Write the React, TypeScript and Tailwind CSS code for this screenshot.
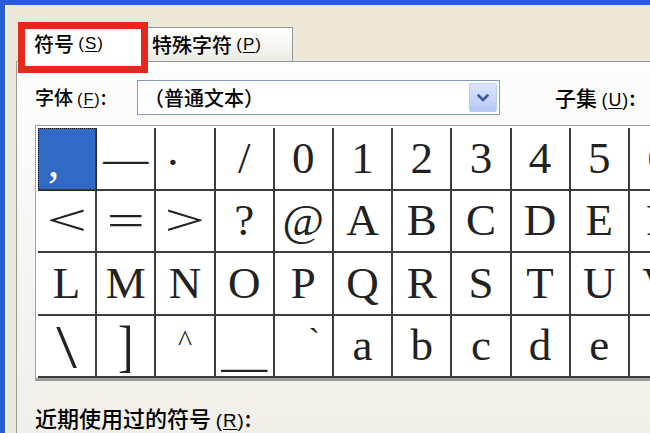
import React from "react";

const cjk = "font-['Noto_Sans_CJK_SC','Noto_Sans',sans-serif]";
const serif = "font-['Liberation_Serif','Times_New_Roman',serif]";

const ROWS: string[][] = [
  [",", "—", ".", "/", "0", "1", "2", "3", "4", "5", "6"],
  ["<", "=", ">", "?", "@", "A", "B", "C", "D", "E", "F"],
  ["L", "M", "N", "O", "P", "Q", "R", "S", "T", "U", "V"],
  ["\\", "]", "^", "_", "`", "a", "b", "c", "d", "e", "f"],
];

// per-cell tweaks for glyphs that sit off-centre in the original
const CELL_STYLE: Record<string, string> = {
  "0-0": "bg-[#316ac5] text-white font-bold justify-start items-end pl-[10px] pb-[4px] outline-1 outline-dotted outline-[#111] -outline-offset-1",
  "0-2": "pr-[24px] pb-[16px]",
  "3-2": "items-start pt-[10px]",
  "3-3": "items-end pb-[2px]",
  "3-4": "justify-end items-start pr-[12px] pt-[8px]",
};

const GLYPH_STYLE: Record<string, string> = {
  "1-0": "scale-x-[1.6]",
  "1-1": "scale-x-[1.5]",
  "1-2": "scale-x-[1.6]",
  "3-0": "text-[62px] scale-x-[1.2]",
  "3-1": "text-[58px] scale-x-[0.8]",
  "3-2": "text-[30px]",
  "3-3": "scale-x-[2]",
  "3-4": "text-[34px]",
};

function Key({ k }: { k: string }) {
  return (
    <span className="font-['Liberation_Sans',sans-serif] text-[0.85em] ml-[0.25em] tracking-[1px]">
      (<span className="underline underline-offset-2">{k}</span>)
    </span>
  );
}

function Chevron() {
  return (
    <svg width="12" height="8" viewBox="0 0 12 8">
      <path d="M1.5 1.5 L6 6 L10.5 1.5" fill="none" stroke="#3d5a98" strokeWidth="2.6" strokeLinecap="round" strokeLinejoin="round" />
    </svg>
  );
}

export default function App() {
  return (
    <div className={`relative w-[650px] h-[433px] overflow-hidden bg-[#ece9d8] text-black font-medium ${cjk}`}>
      <div className="flex h-full flex-col">
        <div className="h-[5px] shrink-0 bg-[#2a5cd6]" />
        <div className="flex min-w-0 flex-1">
          <div className="w-[5px] shrink-0 bg-[#2a5cd6]" />
          <div className="w-[2px] shrink-0 bg-[#f8f7f2]" />
          <div className="flex min-w-0 flex-1 flex-col pl-[9px]">
            {/* tabs */}
            <div className="flex h-[56px] shrink-0 items-end pl-[2px]">
              <div className="relative z-10 -mb-px flex h-[40px] w-[130px] shrink-0 items-center border-x border-t border-[#919b9c] bg-white pl-[15px] pt-[3px] text-[20px]">
                符号<Key k="S" />
              </div>
              <div className="flex h-[34px] w-[145px] shrink-0 items-center border-r border-t border-[#919b9c] bg-linear-to-b from-white to-[#ecebe5] pl-[4px] text-[20px]">
                特殊字符<Key k="P" />
              </div>
            </div>

            {/* tab page */}
            <div className="flex min-w-0 flex-1 flex-col border-l border-t border-[#919b9c] bg-linear-to-b from-[#fdfdfd] to-[#f1efe9] pl-[18px] pt-[18px]">
              <div className="flex h-[35px] shrink-0 items-center">
                <div className="w-[102px] shrink-0 text-[19px] whitespace-nowrap">
                  字体<Key k="F" />:
                </div>
                <div className="flex h-[35px] w-[363px] shrink-0 items-center border border-[#7f9db9] bg-white pl-[6px] pr-[2px]">
                  <span className="text-[20px]">（普通文本）</span>
                  <div className="ml-auto flex h-[29px] w-[28px] items-center justify-center rounded-[2px] border border-[#bccbef] bg-linear-to-b from-[#dde6fc] to-[#b3c7f5]">
                    <Chevron />
                  </div>
                </div>
                <div className="ml-[55px] shrink-0 text-[21px] whitespace-nowrap">
                  子集<Key k="U" />:
                </div>
              </div>

              {/* character grid */}
              <div className="mt-[10px] w-max shrink-0 border-l border-t border-b-[3px] border-l-[#a3a3a3] border-t-[#a3a3a3] border-b-[#9d9d9d] bg-white pl-[2px] pt-[2px]">
                {ROWS.map((row, r) => (
                  <div key={r} className="flex">
                    {row.map((ch, c) => {
                      const id = `${r}-${c}`;
                      return (
                        <div
                          key={id}
                          className={`flex h-[62.5px] w-[59.2px] shrink-0 items-center justify-center border-b-2 border-r-2 border-[#3d3d3d] text-[45px] font-normal leading-none text-[#222] ${serif} ${CELL_STYLE[id] ?? ""}`}
                        >
                          <span className={`inline-block ${GLYPH_STYLE[id] ?? ""}`}>{ch}</span>
                        </div>
                      );
                    })}
                  </div>
                ))}
              </div>

              <div className="mt-[20px] text-[22px] whitespace-nowrap">
                近期使用过的符号<Key k="R" />:
              </div>
            </div>
          </div>
        </div>
      </div>

      {/* red annotation box round the selected tab */}
      <div className="absolute left-[18px] top-[22px] z-20 h-[51px] w-[130px] border-[7px] border-[#e2291c]" />
    </div>
  );
}
